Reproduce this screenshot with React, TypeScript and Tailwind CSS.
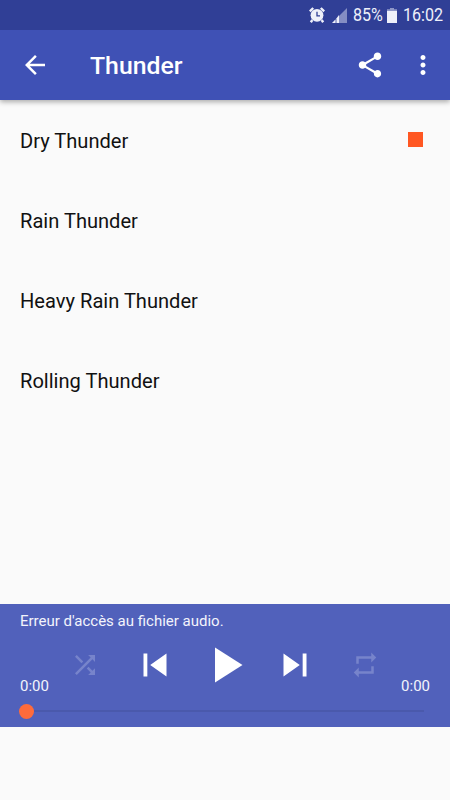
type IconProps = {
  path: string;
  className: string;
};

const ICONS = {
  back: 'M20 11H7.83l5.59-5.59L12 4l-8 8 8 8 1.41-1.41L7.83 13H20v-2z',
  share:
    'M18 16.08c-.76 0-1.44.3-1.96.77L8.91 12.7c.05-.23.09-.46.09-.7s-.04-.47-.09-.7l7.05-4.11c.54.5 1.25.81 2.04.81 1.66 0 3-1.34 3-3s-1.34-3-3-3-3 1.34-3 3c0 .24.04.47.09.7L8.04 9.81C7.5 9.31 6.79 9 6 9c-1.66 0-3 1.34-3 3s1.34 3 3 3c.79 0 1.5-.31 2.04-.81l7.12 4.16c-.05.21-.08.43-.08.65 0 1.61 1.31 2.92 2.92 2.92s2.92-1.31 2.92-2.92-1.31-2.92-2.92-2.92z',
  more: 'M12 8c1.1 0 2-.9 2-2s-.9-2-2-2-2 .9-2 2 .9 2 2 2zm0 2c-1.1 0-2 .9-2 2s.9 2 2 2 2-.9 2-2-.9-2-2-2zm0 6c-1.1 0-2 .9-2 2s.9 2 2 2 2-.9 2-2-.9-2-2-2z',
  shuffle:
    'M10.59 9.17L5.41 4 4 5.41l5.17 5.17 1.42-1.41zM14.5 4l2.04 2.04L4 18.59 5.41 20 17.96 7.46 20 9.5V4h-5.5zm.33 9.41l-1.41 1.41 3.13 3.13L14.5 20H20v-5.5l-2.04 2.04-3.13-3.13z',
  previous: 'M6 6h2v12H6zm3.5 6l8.5 6V6z',
  play: 'M8 5v14l11-7z',
  next: 'M6 18l8.5-6L6 6v12zM16 6v12h2V6h-2z',
  repeat: 'M7 7h10v3l4-4-4-4v3H5v6h2V7zm10 10H7v-3l-4 4 4 4v-3h12v-6h-2v4z',
};

const SOUNDS = ['Dry Thunder', 'Rain Thunder', 'Heavy Rain Thunder', 'Rolling Thunder'];

function Icon({ path, className }: IconProps) {
  return (
    <svg viewBox="0 0 24 24" fill="currentColor" className={`shrink-0 ${className}`}>
      <path d={path} />
    </svg>
  );
}

function StatusBar() {
  return (
    <div className="z-10 flex h-[30px] items-center justify-end bg-[#303f96] pr-[7px] text-[18.5px] text-[#eef0fa]">
      <svg viewBox="0 0 16 16" className="h-4 w-4">
        <circle cx="8" cy="8.3" r="6.4" fill="currentColor" />
        <path d="M.8 4.4L4.2 1M15.2 4.4L11.8 1M3.4 13L1.8 15.2M12.6 13l1.6 2.2" stroke="currentColor" strokeWidth="2.4" />
        <path d="M8 4.8v4h3" stroke="#303f96" strokeWidth="1.3" fill="none" />
      </svg>
      <svg viewBox="0 0 15 15" className="ml-[7px] h-[15px] w-[15px]" fill="currentColor">
        <path d="M15 0v15H7V8z" opacity=".45" />
        <path d="M7 7v8H4.4V10.4z" />
        <path d="M3.6 11.2V15H0z" />
      </svg>
      <span className="ml-[6px] w-[30px] origin-left scale-x-[.87] pt-[2px] whitespace-nowrap">85%</span>
      <svg viewBox="0 0 10 15" className="ml-[4px] h-[15px] w-[10px]" fill="currentColor">
        <path d="M3 0h4v1.2h3V3H0V1.2h3z" opacity=".5" />
        <path d="M0 3h10v12H0z" />
      </svg>
      <span className="ml-[6px] w-[40px] origin-left scale-x-[.87] pt-[2px] whitespace-nowrap">16:02</span>
    </div>
  );
}

function Toolbar() {
  return (
    <header className="flex h-[70px] items-center bg-[#3f51b5] pr-[12.5px] pl-5 text-white shadow-[0_2px_5px_rgba(0,0,0,0.32)]">
      <Icon path={ICONS.back} className="size-[30px]" />
      <h1 className="ml-10 flex-1 pt-[3px] text-[24.8px] leading-none font-medium">Thunder</h1>
      <Icon path={ICONS.share} className="size-[30px]" />
      <Icon path={ICONS.more} className="ml-[22.5px] size-[30px]" />
    </header>
  );
}

function Player() {
  return (
    <footer className="h-[123px] bg-[#5161bb] text-[15px] text-[#f3f4fb]">
      <p className="h-[31px] px-5 pt-[6px] leading-[22px]">Erreur d'accès au fichier audio.</p>
      <div className="flex h-[60px] items-center px-5">
        <span className="w-[50px] shrink-0 pt-[42px] leading-[18px]">0:00</span>
        <div className="flex flex-1 items-center text-white">
          <Icon path={ICONS.shuffle} className="size-[30px] text-[#7784cb]" />
          <Icon path={ICONS.previous} className="ml-8 size-[46px]" />
          <Icon path={ICONS.play} className="ml-[16.5px] size-[60px]" />
          <Icon path={ICONS.next} className="ml-[17.5px] size-[46px]" />
          <Icon path={ICONS.repeat} className="ml-8 size-[30px] text-[#7784cb]" />
        </div>
        <span className="shrink-0 pt-[42px] leading-[18px]">0:00</span>
      </div>
      <div className="flex h-[32px] items-center pr-[26px] pl-[19px]">
        <div className="size-[15px] rounded-full bg-[#ff6b3b]" />
        <div className="h-[2px] flex-1 bg-[#4a59ac]" />
      </div>
    </footer>
  );
}

export default function App() {
  return (
    <div className="flex h-[800px] w-[450px] flex-col overflow-hidden bg-[#fafafa] font-[Roboto,sans-serif]">
      <StatusBar />
      <Toolbar />
      <ul className="flex-1 text-[20.1px] text-[#111]">
        {SOUNDS.map((sound, index) => (
          <li key={sound} className="flex h-20 items-center justify-between pr-[27px] pl-5">
            <span className="pt-[2px]">{sound}</span>
            {index === 0 && <span className="mb-px size-[15px] bg-[#ff5722]" />}
          </li>
        ))}
      </ul>
      <Player />
      <div className="h-[73px]" />
    </div>
  );
}
